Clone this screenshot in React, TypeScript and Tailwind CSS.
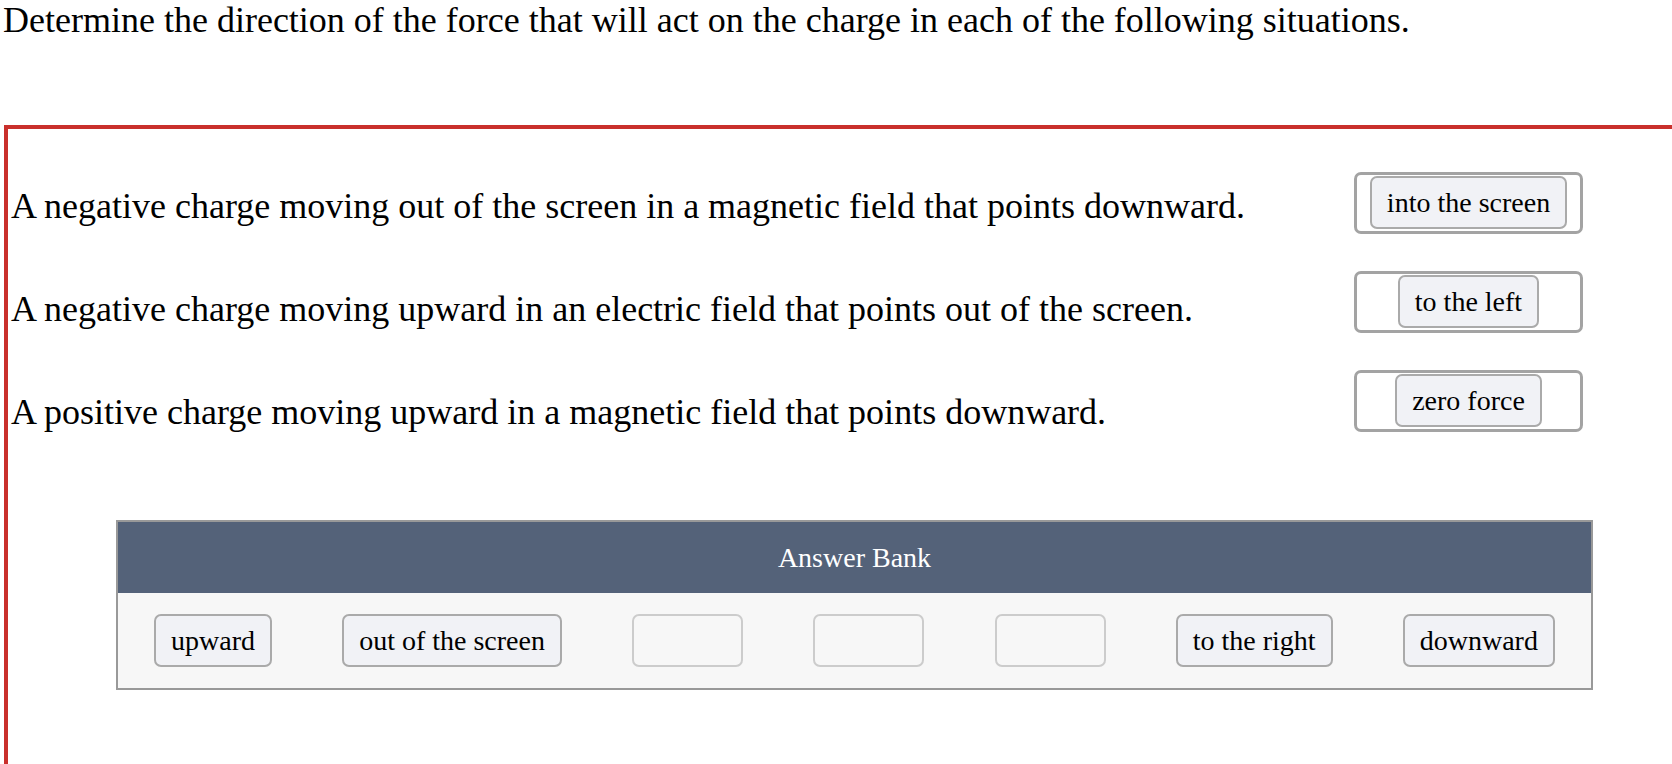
const rows = [
  {
    text: "A negative charge moving out of the screen in a magnetic field that points downward.",
    answer: "into the screen",
    shift: "pt-[6px]",
  },
  {
    text: "A negative charge moving upward in an electric field that points out of the screen.",
    answer: "to the left",
    shift: "pt-[14px]",
  },
  {
    text: "A positive charge moving upward in a magnetic field that points downward.",
    answer: "zero force",
    shift: "pt-[22px]",
  },
];

// null = slot already used (empty placeholder)
const bank: (string | null)[] = [
  "upward",
  "out of the screen",
  null,
  null,
  null,
  "to the right",
  "downward",
];

function Chip({ label }: { label: string }) {
  return (
    <div className="h-[53px] px-[15px] flex items-center justify-center rounded-[7px] border-2 border-[#aaaaaa] bg-[#f1f2f6] text-[28px] text-black whitespace-nowrap">
      {label}
    </div>
  );
}

export default function App() {
  return (
    <div
      className="min-h-[764px] bg-white text-black overflow-hidden"
      style={{ fontFamily: '"Liberation Serif", "Times New Roman", serif' }}
    >
      <h1 className="text-[36px] font-normal leading-[40px] pl-[3px]">
        Determine the direction of the force that will act on the charge in each of the following
        situations.
      </h1>

      <div className="mt-[85px] ml-[4px] min-h-[700px] border-t-4 border-l-4 border-[#c9302c] pt-[24px]">
        {rows.map((row) => (
          <div key={row.answer} className="h-[99px] flex items-center justify-between pl-[3px]">
            <p className={`text-[36px] leading-[40px] ${row.shift}`}>{row.text}</p>
            <div className="w-[229px] h-[62px] mr-[89px] flex items-center justify-center rounded-[7px] border-[3px] border-[#a3a3a3]">
              <Chip label={row.answer} />
            </div>
          </div>
        ))}

        <div className="mt-[70px] ml-[108px] w-[1477px] border-2 border-[#999999]">
          <div className="h-[71px] bg-[#546279] flex items-center justify-center text-white text-[28px]">
            Answer Bank
          </div>
          <div className="h-[95px] bg-[#f7f7f7] flex items-center justify-between px-[36px]">
            {bank.map((item, i) =>
              item ? (
                <Chip key={i} label={item} />
              ) : (
                <div
                  key={i}
                  className="w-[111px] h-[53px] rounded-[7px] border-2 border-[#cccccc] bg-[#f7f7f7]"
                />
              ),
            )}
          </div>
        </div>
      </div>
    </div>
  );
}
